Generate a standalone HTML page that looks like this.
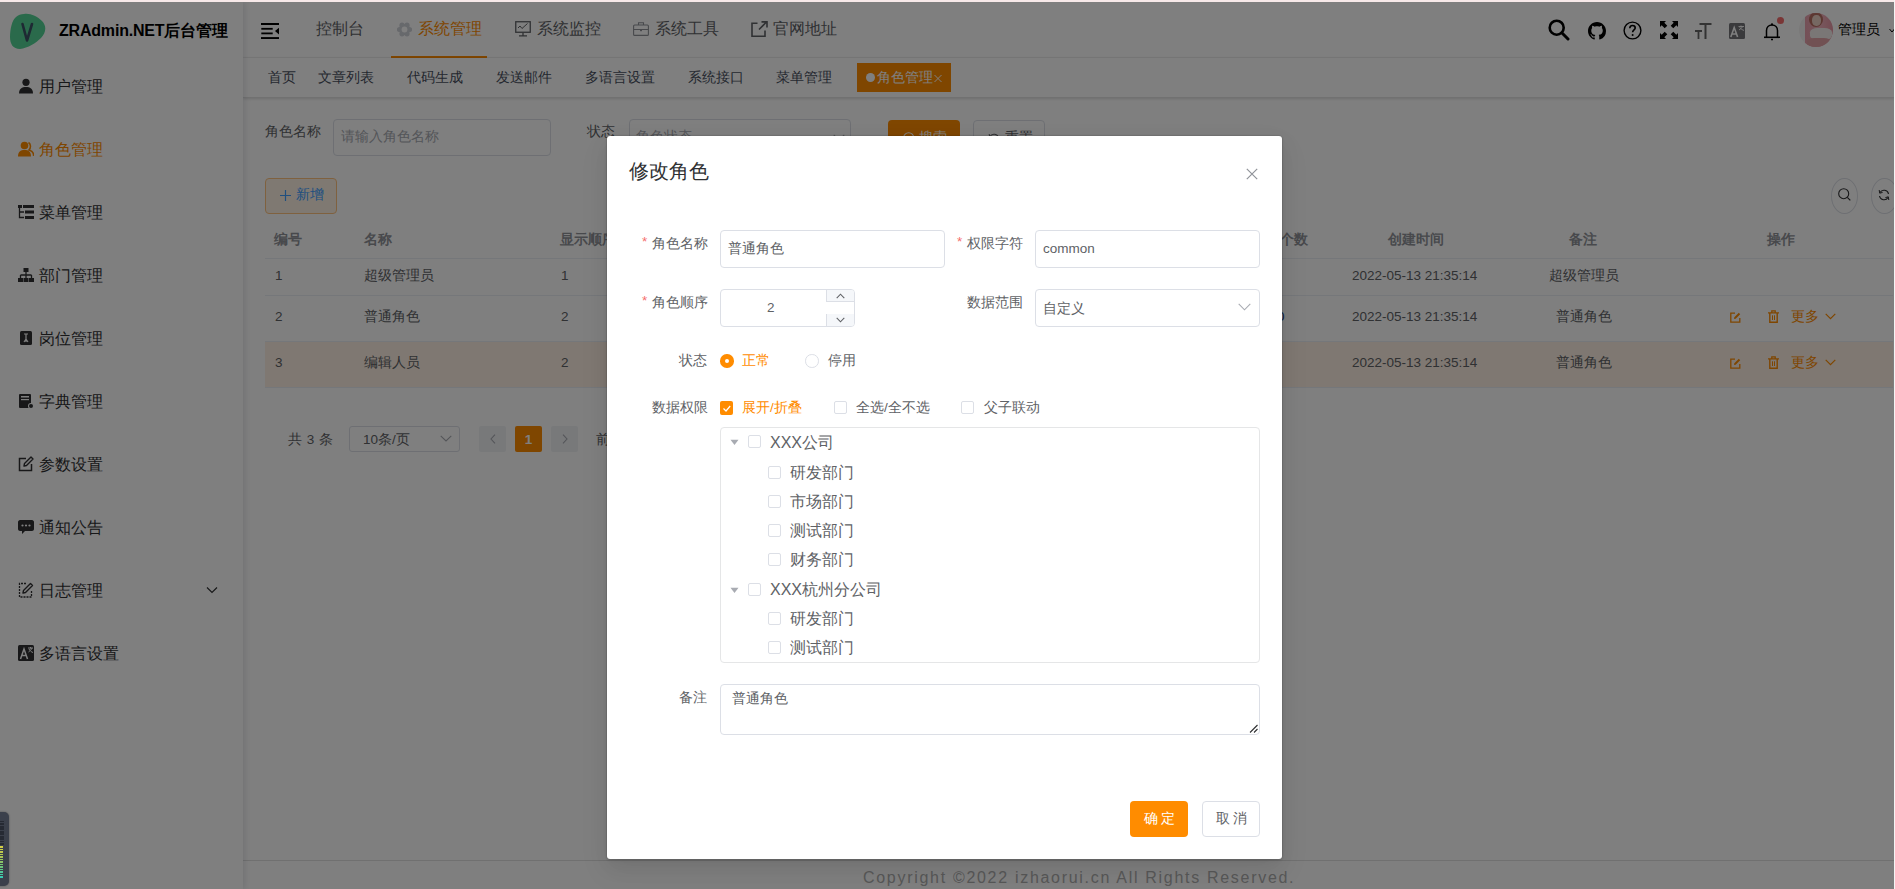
<!DOCTYPE html>
<html><head><meta charset="utf-8">
<style>
*{box-sizing:border-box;margin:0;padding:0}
html,body{width:1895px;height:889px;overflow:hidden;background:#fff;font-family:"Liberation Sans",sans-serif;color:#303133}
.abs{position:absolute}
svg{display:block}
#topline{position:absolute;left:0;top:0;width:1895px;height:2px;background:#f7e9e9;z-index:50}
#sidebar{position:absolute;left:0;top:2px;width:243px;height:887px;background:#fff;z-index:3;box-shadow:2px 0 6px rgba(0,21,41,.11)}
#header{position:absolute;left:243px;top:2px;width:1652px;height:56px;background:#fff;border-bottom:1px solid #f3f3f3}
#tags{position:absolute;left:243px;top:58px;width:1652px;height:40px;background:#fff;z-index:2;border-bottom:1px solid #e2e2e2;box-shadow:0 1px 3px 0 rgba(0,0,0,.12),0 0 3px 0 rgba(0,0,0,.04)}
#main{position:absolute;left:243px;top:98px;width:1652px;height:762px;background:#fff}
#footer{position:absolute;left:243px;top:860px;width:1652px;height:29px;background:#fff;border-top:1px solid #e0e0e0}
#mask{position:absolute;left:0;top:0;width:1895px;height:889px;background:rgba(0,0,0,.5);z-index:20}
#dialog{position:absolute;left:607px;top:136px;width:675px;height:723px;background:#fff;border-radius:3px;z-index:30;box-shadow:0 0 1.5px rgba(0,0,0,.35),0 1px 3px rgba(0,0,0,.12),0 12px 32px 4px rgba(0,0,0,.04),0 8px 20px rgba(0,0,0,.08)}
.mi{position:absolute;left:0;width:243px;height:20px;font-size:16px;line-height:20px;color:#303133}
.mi .ic{position:absolute;left:18px;top:2px;width:16px;height:16px}
.mi .tx{position:absolute;left:39px;top:1px}
.nav{position:absolute;top:17px;font-size:16px;line-height:20px;color:#606266}
.tg{position:absolute;top:10px;font-size:13.5px;line-height:20px;color:#495060}
.lbl14{position:absolute;font-size:13.5px;line-height:20px;white-space:nowrap}
.th{position:absolute;top:132px;font-size:13.5px;line-height:20px;font-weight:bold;color:#909399;white-space:nowrap}
.td{position:absolute;font-size:13.5px;line-height:20px;color:#606266;white-space:nowrap}
.dt{font-size:13.5px}
.ops{position:absolute;left:1487px;width:120px;height:20px}
.req{position:absolute;font-size:13.5px;line-height:14px;color:#f56c6c}
.fl{position:absolute;font-size:13.5px;line-height:20px;color:#606266;white-space:nowrap}
.fv{position:absolute;font-size:13.5px;line-height:20px;color:#606266;white-space:nowrap}
.inp{position:absolute;border:1px solid #dcdfe6;border-radius:4px}
.cb{position:absolute;width:13px;height:13px;border:1px solid #dcdfe6;border-radius:2px;background:#fff}
.tn{position:absolute;font-size:16px;line-height:22px;color:#606266;white-space:nowrap}
</style></head><body>
<div id="topline"></div>
<div class="abs" style="left:1894px;top:0;width:1px;height:889px;background:#f4f4f4;z-index:50"></div>

<!-- SIDEBAR -->
<div id="sidebar">
  <svg class="abs" style="left:10px;top:11px" width="36" height="36" viewBox="0 0 36 36">
    <path d="M14 1 C20 0 27 3 32 8 C37 13 36 20 31 25 C26 30 18 35 10 36 C3 36 0 31 0 24 C0 16 2 7 6 4 C8 2 11 1 14 1 Z" fill="#55d596"/>
    <path d="M12.5 11 L17 27.5 L22 11" fill="none" stroke="#3c5266" stroke-width="2.6" stroke-linecap="round" stroke-linejoin="round"/>
  </svg>
  <div class="abs" style="left:59px;top:19px;font-size:16px;line-height:20px;font-weight:bold;color:#000;letter-spacing:-0.2px">ZRAdmin.NET后台管理</div>

  <div class="mi" style="top:74px"><svg class="ic" viewBox="0 0 16 16"><circle cx="8" cy="4.3" r="3.6" fill="#303133"/><path d="M1 15.5 C1 10.5 4 9 8 9 C12 9 15 10.5 15 15.5 Z" fill="#303133"/></svg><span class="tx">用户管理</span></div>
  <div class="mi" style="top:137px;color:#ff8c00"><svg class="ic" viewBox="0 0 16 16"><circle cx="6.5" cy="4.5" r="3.8" fill="#ff8c00"/><path d="M0 15.5 C0 10.5 2.5 9 6.5 9 C10.5 9 13 10.5 13 15.5 Z" fill="#ff8c00"/><path d="M10.5 1.5 C13 3 13 7 11 9 C14 10 16 12 15.5 15" fill="none" stroke="#ff8c00" stroke-width="1.6"/></svg><span class="tx">角色管理</span></div>
  <div class="mi" style="top:200px"><svg class="ic" viewBox="0 0 16 16"><rect x="0" y="1" width="4" height="3" fill="#303133"/><rect x="5" y="1" width="11" height="3" fill="#303133"/><rect x="7" y="6.5" width="9" height="3" fill="#303133"/><rect x="7" y="12" width="9" height="3" fill="#303133"/><path d="M1.5 4 V13.5 H6 M1.5 8 H6" fill="none" stroke="#303133" stroke-width="1.3"/></svg><span class="tx">菜单管理</span></div>
  <div class="mi" style="top:263px"><svg class="ic" viewBox="0 0 16 16"><rect x="5.5" y="1" width="5" height="4" fill="#303133"/><path d="M8 5 V8 M2.5 8 H13.5 M2.5 8 V11 M8 8 V11 M13.5 8 V11" fill="none" stroke="#303133" stroke-width="1.3"/><rect x="0" y="11" width="5" height="4" fill="#303133"/><rect x="5.5" y="11" width="5" height="4" fill="#303133"/><rect x="11" y="11" width="5" height="4" fill="#303133"/></svg><span class="tx">部门管理</span></div>
  <div class="mi" style="top:326px"><svg class="ic" viewBox="0 0 16 16"><rect x="2" y="1" width="12" height="14" rx="1.5" fill="#303133"/><path d="M6 4 H10 M8 4 V12 M6 12 L8 9 L10 12" fill="none" stroke="#fff" stroke-width="1.2"/></svg><span class="tx">岗位管理</span></div>
  <div class="mi" style="top:389px"><svg class="ic" viewBox="0 0 16 16"><rect x="1" y="1" width="12" height="14" rx="1" fill="#303133"/><rect x="3" y="3" width="8" height="1.5" fill="#fff"/><rect x="3" y="6" width="8" height="1.2" fill="#fff"/><circle cx="13" cy="13" r="3" fill="#fff"/><circle cx="13" cy="13" r="2" fill="#303133"/></svg><span class="tx">字典管理</span></div>
  <div class="mi" style="top:452px"><svg class="ic" viewBox="0 0 16 16"><path d="M8 2.5 H1.5 V14.5 H13.5 V8" fill="none" stroke="#303133" stroke-width="1.5"/><path d="M6 10 L6.5 7.5 L13 1 L15 3 L8.5 9.5 Z" fill="none" stroke="#303133" stroke-width="1.4" stroke-linejoin="round"/></svg><span class="tx">参数设置</span></div>
  <div class="mi" style="top:515px"><svg class="ic" viewBox="0 0 16 16"><path d="M2 1 H14 C15 1 16 2 16 3 V10 C16 11 15 12 14 12 H7 L4 15 V12 H2 C1 12 0 11 0 10 V3 C0 2 1 1 2 1 Z" fill="#303133"/><circle cx="4.5" cy="6.5" r="1.1" fill="#fff"/><circle cx="8" cy="6.5" r="1.1" fill="#fff"/><circle cx="11.5" cy="6.5" r="1.1" fill="#fff"/></svg><span class="tx">通知公告</span></div>
  <div class="mi" style="top:578px"><svg class="ic" viewBox="0 0 16 16"><path d="M8 1.5 H1.5 V15 H13.5 V8" fill="none" stroke="#303133" stroke-width="1.3" stroke-dasharray="2 1"/><path d="M5 11 L5.5 8.5 L12.5 1.5 L14.5 3.5 L7.5 10.5 Z" fill="none" stroke="#303133" stroke-width="1.4" stroke-linejoin="round"/></svg><span class="tx">日志管理</span>
    <svg class="abs" style="left:206px;top:6px" width="12" height="8" viewBox="0 0 12 8"><path d="M1 1.5 L6 6.5 L11 1.5" fill="none" stroke="#303133" stroke-width="1.2"/></svg></div>
  <div class="mi" style="top:641px"><svg class="ic" viewBox="0 0 16 16"><rect x="0" y="0" width="16" height="16" rx="1.5" fill="#303133"/><path d="M2.5 14 L6 4 L9.5 14 M3.8 10.5 H8.2" fill="none" stroke="#fff" stroke-width="1.5"/><path d="M10 3 H15 M12.5 2 V3.5 M10.5 7 C12 6 13.5 4.5 14 3 M11 4 C12 6 13.5 7 15 7.5" fill="none" stroke="#fff" stroke-width="1"/></svg><span class="tx">多语言设置</span></div>
</div>

<!-- HEADER -->
<div id="header">
  <svg class="abs" style="left:18px;top:21px" width="18" height="17" viewBox="0 0 18 17">
    <rect x="0" y="0" width="18" height="2" fill="#000"/>
    <rect x="0.3" y="4.9" width="11.4" height="1.8" fill="#000"/>
    <rect x="0.3" y="9.5" width="11.4" height="1.8" fill="#000"/>
    <path d="M18 4.8 L14 8.1 L18 11.4 Z" fill="#000"/>
    <rect x="0" y="14.1" width="18" height="1.9" fill="#000"/>
  </svg>
  <div class="nav" style="left:73px">控制台</div>
  <svg class="abs" style="left:154px;top:19.5px" width="15" height="15" viewBox="0 0 15 15"><mask id="gh"><rect width="15" height="15" fill="#fff"/><circle cx="7.5" cy="7.5" r="2.9" fill="#000"/></mask><g fill="#cfd2d8" mask="url(#gh)"><circle cx="7.5" cy="7.5" r="5.6"/><circle cx="12.50" cy="7.50" r="2.6"/><circle cx="10.00" cy="11.83" r="2.6"/><circle cx="5.00" cy="11.83" r="2.6"/><circle cx="2.50" cy="7.50" r="2.6"/><circle cx="5.00" cy="3.17" r="2.6"/><circle cx="10.00" cy="3.17" r="2.6"/></g></svg>
  <div class="nav" style="left:175px;color:#ff8c00">系统管理</div>
  <div class="abs" style="left:148px;top:54px;width:96px;height:2px;background:#ff8c00"></div>
  <svg class="abs" style="left:272px;top:19px" width="16" height="16" viewBox="0 0 16 16"><rect x="0.75" y="0.75" width="14.5" height="10.5" fill="none" stroke="#606266" stroke-width="1.3"/><path d="M8 11.5 V14.5 M4 14.8 H12" stroke="#606266" stroke-width="1.3"/><path d="M3 7 L5 5 L7 7.5 L12.5 2.5" fill="none" stroke="#606266" stroke-width="1"/></svg>
  <div class="nav" style="left:294px">系统监控</div>
  <svg class="abs" style="left:390px;top:20px" width="16" height="14" viewBox="0 0 16 14"><rect x="0.6" y="3" width="14.8" height="10.4" rx="1" fill="none" stroke="#909399" stroke-width="1.1"/><path d="M5.5 3 V0.8 H10.5 V3 M0.6 7.5 H15.4" fill="none" stroke="#909399" stroke-width="1.1"/><rect x="7" y="7" width="2" height="2.2" fill="#909399"/></svg>
  <div class="nav" style="left:412px">系统工具</div>
  <svg class="abs" style="left:508px;top:19px" width="17" height="16" viewBox="0 0 17 16"><path d="M6.5 2.2 H1 V15.2 H14 V9.5" fill="none" stroke="#606266" stroke-width="1.6"/><path d="M8 8.5 L15.5 1 M10.5 0.9 H16 V6.4" fill="none" stroke="#606266" stroke-width="1.6"/></svg>
  <div class="nav" style="left:530px">官网地址</div>

  <!-- right icons -->
  <svg class="abs" style="left:1305px;top:17px" width="22" height="22" viewBox="0 0 22 22"><circle cx="8.7" cy="8.7" r="7" fill="none" stroke="#000" stroke-width="2.6"/><path d="M13.8 13.8 L20 20" stroke="#000" stroke-width="3" stroke-linecap="round"/></svg>
  <svg class="abs" style="left:1345px;top:19.5px" width="18" height="18" viewBox="0 0 16 16"><path fill="#000" d="M8 0C3.58 0 0 3.58 0 8c0 3.54 2.29 6.53 5.47 7.59.4.07.55-.17.55-.38 0-.19-.01-.82-.01-1.49-2.01.37-2.53-.49-2.69-.94-.09-.23-.48-.94-.82-1.13-.28-.15-.68-.52-.01-.53.63-.01 1.08.58 1.23.82.72 1.21 1.87.87 2.33.66.07-.52.28-.87.51-1.07-1.78-.2-3.64-.89-3.64-3.95 0-.87.31-1.59.82-2.15-.08-.2-.36-1.02.08-2.12 0 0 .67-.21 2.2.82.64-.18 1.32-.27 2-.27.68 0 1.36.09 2 .27 1.53-1.04 2.2-.82 2.2-.82.44 1.1.16 1.92.08 2.12.51.56.82 1.27.82 2.15 0 3.07-1.87 3.75-3.65 3.95.29.25.54.73.54 1.48 0 1.07-.01 1.93-.01 2.2 0 .21.15.46.55.38A8.013 8.013 0 0016 8c0-4.42-3.58-8-8-8z"/></svg>
  <svg class="abs" style="left:1380px;top:19px" width="19" height="19" viewBox="0 0 19 19"><circle cx="9.5" cy="9.5" r="8.4" fill="none" stroke="#000" stroke-width="1.4"/><path d="M6.8 7.2 C6.8 5.4 8 4.5 9.5 4.5 C11 4.5 12.2 5.5 12.2 7 C12.2 8.8 9.6 9 9.6 11.2" fill="none" stroke="#000" stroke-width="1.6"/><circle cx="9.6" cy="13.9" r="1" fill="#000"/></svg>
  <svg class="abs" style="left:1417px;top:19px" width="18" height="18" viewBox="0 0 18 18"><path fill="#000" d="M0 0 H6 L4.3 1.7 L7.3 4.7 L4.7 7.3 L1.7 4.3 L0 6 Z M18 0 V6 L16.3 4.3 L13.3 7.3 L10.7 4.7 L13.7 1.7 L12 0 Z M0 18 V12 L1.7 13.7 L4.7 10.7 L7.3 13.3 L4.3 16.3 L6 18 Z M18 18 H12 L13.7 16.3 L10.7 13.3 L13.3 10.7 L16.3 13.7 L18 12 Z"/></svg>
  <svg class="abs" style="left:1452px;top:20px" width="17" height="18" viewBox="0 0 17 18"><path d="M4.5 2 H16.5 M10.5 2 V17" stroke="#666" stroke-width="2"/><path d="M0 9 H7 M3.5 9 V17" stroke="#666" stroke-width="1.8"/></svg>
  <svg class="abs" style="left:1486px;top:21px" width="16" height="16" viewBox="0 0 16 16"><rect x="0" y="0" width="16" height="16" rx="1.5" fill="#747478"/><path d="M1.8 14 L5.2 4.5 L8.6 14 M3 11 H7.4" fill="none" stroke="#fff" stroke-width="1.6"/><path d="M9.5 3.5 H15 M12 2.5 V4 M10 7 C11.5 6 13 4.8 13.8 3.5 M10.8 4.3 C11.8 6 13.5 7 15 7.4" fill="none" stroke="#fff" stroke-width="0.9"/></svg>
  <svg class="abs" style="left:1520px;top:20px" width="18" height="19" viewBox="0 0 18 19"><path d="M3.5 15 V8.5 C3.5 5.2 5.8 3 9 3 C12.2 3 14.5 5.2 14.5 8.5 V15" fill="none" stroke="#000" stroke-width="1.5"/><path d="M1 15.3 H17" stroke="#000" stroke-width="1.6"/><circle cx="9" cy="2.3" r="1.1" fill="#000"/><path d="M8 17.5 H10" stroke="#000" stroke-width="1.3"/></svg>
  <div class="abs" style="left:1534px;top:15px;width:7px;height:7px;border-radius:50%;background:#f56c6c"></div>
  <div class="abs" style="left:1556px;top:10.5px;width:34px;height:34px;border-radius:50%;overflow:hidden;background:#f4f2f2">
    <div class="abs" style="left:6px;top:0;width:30px;height:34px;background:linear-gradient(90deg,#e9a0ad 0%,#f0b0bb 50%,#e691a0 100%)"></div>
    <div class="abs" style="left:10px;top:-1px;width:14px;height:15px;border-radius:50%;background:#b86e62"></div>
    <div class="abs" style="left:12.5px;top:2px;width:9px;height:11px;border-radius:45%;background:#ecd0c4"></div>
    <div class="abs" style="left:11px;top:15px;width:22px;height:12px;border-radius:35%;background:#f4eeec"></div>
    <div class="abs" style="left:8px;top:25px;width:24px;height:12px;border-radius:30%;background:#e2a2a6"></div>
  </div>
  <div class="abs" style="left:1595px;top:18px;font-size:13.5px;line-height:20px;color:#000">管理员</div>
  <svg class="abs" style="left:1646px;top:26px" width="6" height="6" viewBox="0 0 6 6"><path d="M0.5 1 L3 4 L5.5 1" fill="none" stroke="#000" stroke-width="1"/></svg>
</div>

<div id="tags">
  <div class="tg" style="left:25px">首页</div>
  <div class="tg" style="left:75px">文章列表</div>
  <div class="tg" style="left:164px">代码生成</div>
  <div class="tg" style="left:253px">发送邮件</div>
  <div class="tg" style="left:342px">多语言设置</div>
  <div class="tg" style="left:445px">系统接口</div>
  <div class="tg" style="left:533px">菜单管理</div>
  <div class="abs" style="left:614px;top:5px;width:94px;height:29px;background:#ff8c00"></div>
  <div class="abs" style="left:623px;top:15px;width:9px;height:9px;border-radius:50%;background:#fff"></div>
  <div class="tg" style="left:634px;color:#fff">角色管理</div>
  <svg class="abs" style="left:691px;top:16px" width="8" height="9" viewBox="0 0 8 9"><path d="M0.5 1 L7.5 8 M7.5 1 L0.5 8" stroke="#fff" stroke-width="1"/></svg>
</div>

<div id="main">
  <!-- search form (page coords minus 243,98) -->
  <div class="lbl14" style="left:22px;top:24px;color:#606266">角色名称</div>
  <div class="abs" style="left:90px;top:21px;width:218px;height:37px;border:1px solid #dcdfe6;border-radius:4px"></div>
  <div class="lbl14" style="left:98px;top:29px;color:#a8abb2">请输入角色名称</div>
  <div class="lbl14" style="left:344px;top:24px;color:#606266">状态</div>
  <div class="abs" style="left:386px;top:21px;width:222px;height:37px;border:1px solid #dcdfe6;border-radius:4px"></div>
  <div class="lbl14" style="left:393px;top:29px;color:#a8abb2">角色状态</div>
  <div class="abs" style="left:645px;top:22px;width:72px;height:36px;background:#ff8c00;border-radius:4px"></div>
  <svg class="abs" style="left:660px;top:34px" width="13" height="13" viewBox="0 0 13 13"><circle cx="5.7" cy="5.7" r="5" fill="none" stroke="#fff" stroke-width="1.1"/><path d="M9.3 9.3 L12.3 12.3" stroke="#fff" stroke-width="1.2"/></svg>
  <div class="lbl14" style="left:676px;top:30px;color:#fff">搜索</div>
  <div class="abs" style="left:730px;top:22px;width:72px;height:36px;border:1px solid #dcdfe6;border-radius:4px"></div>
  <svg class="abs" style="left:745px;top:35px" width="12" height="12" viewBox="0 0 12 12"><path d="M10.5 5 A4.6 4.6 0 0 0 2 3.5 M1.5 7 A4.6 4.6 0 0 0 10 8.5" fill="none" stroke="#606266" stroke-width="1.1"/><path d="M1.2 1 L1.7 4.2 L4.6 3.4" fill="none" stroke="#606266" stroke-width="1"/></svg>
  <div class="lbl14" style="left:762px;top:30px;color:#606266">重置</div>
  <svg class="abs" style="left:590px;top:36px" width="12" height="7" viewBox="0 0 12 7"><path d="M0.7 0.8 L6 6 L11.3 0.8" fill="none" stroke="#a8abb2" stroke-width="1.1"/></svg>
  <div class="td" style="left:1034px;top:209px;color:#1f3f8a">0</div>

  <!-- add button -->
  <div class="abs" style="left:22px;top:80px;width:72px;height:36px;background:#fff3e5;border:1px solid #ffc27e;border-radius:4px"></div>
  <svg class="abs" style="left:37px;top:92px" width="11" height="11" viewBox="0 0 11 11"><path d="M5.5 0 V11 M0 5.5 H11" stroke="#409eff" stroke-width="1.2"/></svg>
  <div class="lbl14" style="left:53px;top:87px;color:#409eff">新增</div>

  <!-- toolbar circles -->
  <div class="abs" style="left:1588px;top:80px;width:27px;height:36px;border:1px solid #dcdfe6;border-radius:50%"></div>
  <svg class="abs" style="left:1595px;top:90px" width="13" height="13" viewBox="0 0 13 13"><circle cx="5.7" cy="5.7" r="5" fill="none" stroke="#303133" stroke-width="1.1"/><path d="M9.3 9.3 L12.3 12.3" stroke="#303133" stroke-width="1.2"/></svg>
  <div class="abs" style="left:1628px;top:80px;width:27px;height:36px;border:1px solid #dcdfe6;border-radius:50%"></div>
  <svg class="abs" style="left:1635px;top:91px" width="12" height="12" viewBox="0 0 12 12"><path d="M10.5 5 A4.6 4.6 0 0 0 2 3.5 M1.5 7 A4.6 4.6 0 0 0 10 8.5" fill="none" stroke="#303133" stroke-width="1.1"/><path d="M1.2 1 L1.7 4.2 L4.6 3.4 M10.8 11 L10.3 7.8 L7.4 8.6" fill="none" stroke="#303133" stroke-width="1"/></svg>

  <!-- table -->
  <div class="abs" style="left:22px;top:160px;width:1628px;height:1px;background:#ebeef5"></div>
  <div class="th" style="left:31px">编号</div>
  <div class="th" style="left:121px">名称</div>
  <div class="th" style="left:317px">显示顺序</div>
  <div class="th" style="left:1009px">用户个数</div>
  <div class="th" style="left:1145px">创建时间</div>
  <div class="th" style="left:1326px">备注</div>
  <div class="th" style="left:1524px">操作</div>
  <div class="abs" style="left:22px;top:197px;width:1628px;height:1px;background:#ebeef5"></div>
  <div class="abs" style="left:22px;top:243px;width:1628px;height:46px;background:#fff1e5"></div>
  <div class="abs" style="left:22px;top:243px;width:1628px;height:1px;background:#ebeef5"></div>
  <div class="abs" style="left:22px;top:289px;width:1628px;height:1px;background:#ebeef5"></div>

  <div class="td" style="left:32px;top:168px">1</div>
  <div class="td" style="left:121px;top:168px">超级管理员</div>
  <div class="td" style="left:318px;top:168px">1</div>
  <div class="td dt" style="left:1109px;top:168px">2022-05-13 21:35:14</div>
  <div class="td" style="left:1306px;top:168px">超级管理员</div>

  <div class="td" style="left:32px;top:209px">2</div>
  <div class="td" style="left:121px;top:209px">普通角色</div>
  <div class="td" style="left:318px;top:209px">2</div>
  <div class="td dt" style="left:1109px;top:209px">2022-05-13 21:35:14</div>
  <div class="td" style="left:1313px;top:209px">普通角色</div>

  <div class="td" style="left:32px;top:255px">3</div>
  <div class="td" style="left:121px;top:255px">编辑人员</div>
  <div class="td" style="left:318px;top:255px">2</div>
  <div class="td dt" style="left:1109px;top:255px">2022-05-13 21:35:14</div>
  <div class="td" style="left:1313px;top:255px">普通角色</div>

  <div class="ops" style="top:209px">
    <svg class="abs" style="left:0;top:5px" width="11" height="11" viewBox="0 0 11 11"><path d="M5 1.2 H0.8 V10.2 H9.8 V6" fill="none" stroke="#ff8c00" stroke-width="1.3"/><path d="M4 7 L4.3 5.3 L8.8 0.8 L10.2 2.2 L5.7 6.7 Z" fill="#ff8c00"/></svg>
    <svg class="abs" style="left:38px;top:3px" width="11" height="13" viewBox="0 0 11 13"><path d="M0 2.8 H11 M3.8 2.8 V0.8 H7.2 V2.8" fill="none" stroke="#ff8c00" stroke-width="1.3"/><path d="M1.8 3 V12.2 H9.2 V3" fill="none" stroke="#ff8c00" stroke-width="1.4"/><path d="M4.5 5.3 V10 M6.5 5.3 V10" stroke="#ff8c00" stroke-width="1"/></svg>
    <div class="abs" style="left:61px;top:0;font-size:13.5px;line-height:20px;color:#ff8c00">更多</div>
    <svg class="abs" style="left:95px;top:6px" width="11" height="7" viewBox="0 0 11 7"><path d="M0.7 0.8 L5.5 5.6 L10.3 0.8" fill="none" stroke="#ff8c00" stroke-width="1.2"/></svg>
  </div>
  <div class="ops" style="top:255px">
    <svg class="abs" style="left:0;top:5px" width="11" height="11" viewBox="0 0 11 11"><path d="M5 1.2 H0.8 V10.2 H9.8 V6" fill="none" stroke="#ff8c00" stroke-width="1.3"/><path d="M4 7 L4.3 5.3 L8.8 0.8 L10.2 2.2 L5.7 6.7 Z" fill="#ff8c00"/></svg>
    <svg class="abs" style="left:38px;top:3px" width="11" height="13" viewBox="0 0 11 13"><path d="M0 2.8 H11 M3.8 2.8 V0.8 H7.2 V2.8" fill="none" stroke="#ff8c00" stroke-width="1.3"/><path d="M1.8 3 V12.2 H9.2 V3" fill="none" stroke="#ff8c00" stroke-width="1.4"/><path d="M4.5 5.3 V10 M6.5 5.3 V10" stroke="#ff8c00" stroke-width="1"/></svg>
    <div class="abs" style="left:61px;top:0;font-size:13.5px;line-height:20px;color:#ff8c00">更多</div>
    <svg class="abs" style="left:95px;top:6px" width="11" height="7" viewBox="0 0 11 7"><path d="M0.7 0.8 L5.5 5.6 L10.3 0.8" fill="none" stroke="#ff8c00" stroke-width="1.2"/></svg>
  </div>

  <!-- pagination -->
  <div class="lbl14" style="left:45px;top:332px;color:#606266;word-spacing:1px">共 3 条</div>
  <div class="abs" style="left:106px;top:328px;width:111px;height:26px;border:1px solid #dcdfe6;border-radius:3px"></div>
  <div class="lbl14" style="left:120px;top:332px;color:#606266">10条/页</div>
  <svg class="abs" style="left:197px;top:337px" width="12" height="7" viewBox="0 0 12 7"><path d="M0.7 0.8 L6 6 L11.3 0.8" fill="none" stroke="#a8abb2" stroke-width="1.1"/></svg>
  <div class="abs" style="left:236px;top:328px;width:27px;height:26px;background:#f0f2f5;border-radius:2px"></div>
  <svg class="abs" style="left:247px;top:336px" width="6" height="10" viewBox="0 0 6 10"><path d="M5 0.7 L1 5 L5 9.3" fill="none" stroke="#a8abb2" stroke-width="1.1"/></svg>
  <div class="abs" style="left:272px;top:328px;width:27px;height:26px;background:#ff8c00;border-radius:2px"></div>
  <div class="abs" style="left:272px;top:332px;width:27px;text-align:center;font-size:13.5px;line-height:20px;font-weight:bold;color:#fff">1</div>
  <div class="abs" style="left:308px;top:328px;width:27px;height:26px;background:#f0f2f5;border-radius:2px"></div>
  <svg class="abs" style="left:319px;top:336px" width="6" height="10" viewBox="0 0 6 10"><path d="M1 0.7 L5 5 L1 9.3" fill="none" stroke="#a8abb2" stroke-width="1.1"/></svg>
  <div class="lbl14" style="left:353px;top:332px;color:#606266">前往</div>
</div>

<div id="footer">
  <div class="abs" style="left:620px;top:7px;font-size:16px;line-height:20px;color:#b0b0b0;letter-spacing:1.7px;white-space:nowrap">Copyright ©2022 izhaorui.cn All Rights Reserved.</div>
</div>

<div id="mask"></div>
<div class="abs" style="left:-10px;top:812px;width:19px;height:74px;background:#3b404b;border-radius:5px;z-index:40;box-shadow:0 0 2px rgba(0,0,0,.4)">
  <div class="abs" style="left:10px;top:9px;width:4px;height:25px;background:repeating-linear-gradient(180deg,#262a33 0,#262a33 1.5px,#3b404b 1.5px,#3b404b 2.5px)"></div>
  <div class="abs" style="left:10px;top:34px;width:3px;height:32px;background:linear-gradient(180deg,#d6cf45 0%,#a9c455 35%,#6cc47a 65%,#35c9b5 100%)"></div>
  <div class="abs" style="left:10px;top:34px;width:3px;height:32px;background:repeating-linear-gradient(180deg,transparent 0,transparent 1.5px,#3b404b 1.5px,#3b404b 2.5px)"></div>
</div>

<div id="dialog">
  <div class="abs" style="left:22px;top:21px;font-size:20px;line-height:28px;color:#303133">修改角色</div>
  <svg class="abs" style="left:639px;top:32px" width="12" height="12" viewBox="0 0 12 12"><path d="M0.8 0.8 L11.2 11.2 M11.2 0.8 L0.8 11.2" stroke="#909399" stroke-width="1.2"/></svg>

  <!-- row 1 -->
  <div class="req" style="left:35px;top:99px">*</div>
  <div class="fl" style="left:45px;top:98px">角色名称</div>
  <div class="inp" style="left:113px;top:94px;width:225px;height:38px"></div>
  <div class="fv" style="left:121px;top:103px">普通角色</div>
  <div class="req" style="left:350px;top:99px">*</div>
  <div class="fl" style="left:360px;top:98px">权限字符</div>
  <div class="inp" style="left:428px;top:94px;width:225px;height:38px"></div>
  <div class="fv" style="left:436px;top:103px;font-size:13.5px">common</div>

  <!-- row 2 -->
  <div class="req" style="left:35px;top:158px">*</div>
  <div class="fl" style="left:45px;top:157px">角色顺序</div>
  <div class="inp" style="left:113px;top:153px;width:135px;height:38px"></div>
  <div class="abs" style="left:219px;top:154px;width:28px;height:12px;background:#f5f7fa;border-left:1px solid #dcdfe6;border-bottom:1px solid #dcdfe6;border-top-right-radius:3px"></div>
  <div class="abs" style="left:219px;top:178px;width:28px;height:12px;background:#f5f7fa;border-left:1px solid #dcdfe6;border-bottom-right-radius:3px"></div>
  <svg class="abs" style="left:229px;top:157px" width="9" height="6" viewBox="0 0 9 6"><path d="M0.7 5.2 L4.5 1.2 L8.3 5.2" fill="none" stroke="#606266" stroke-width="1.1"/></svg>
  <svg class="abs" style="left:229px;top:181px" width="9" height="6" viewBox="0 0 9 6"><path d="M0.7 0.8 L4.5 4.8 L8.3 0.8" fill="none" stroke="#606266" stroke-width="1.1"/></svg>
  <div class="fv" style="left:160px;top:162px">2</div>
  <div class="fl" style="left:360px;top:157px">数据范围</div>
  <div class="inp" style="left:428px;top:153px;width:225px;height:38px"></div>
  <div class="fv" style="left:436px;top:163px">自定义</div>
  <svg class="abs" style="left:631px;top:167px" width="13" height="8" viewBox="0 0 13 8"><path d="M0.7 0.8 L6.5 6.8 L12.3 0.8" fill="none" stroke="#a8abb2" stroke-width="1.1"/></svg>

  <!-- row 3 status -->
  <div class="fl" style="left:72px;top:215px">状态</div>
  <div class="abs" style="left:113px;top:218px;width:13.5px;height:13.5px;border-radius:50%;background:#ff8c00"></div>
  <div class="abs" style="left:117.5px;top:222.5px;width:4.5px;height:4.5px;border-radius:50%;background:#fff"></div>
  <div class="fl" style="left:135px;top:215px;color:#ff8c00">正常</div>
  <div class="abs" style="left:198px;top:218px;width:13.5px;height:13.5px;border-radius:50%;border:1px solid #dcdfe6"></div>
  <div class="fl" style="left:221px;top:215px">停用</div>

  <!-- row 4 data perms -->
  <div class="fl" style="left:45px;top:262px">数据权限</div>
  <div class="abs" style="left:113px;top:265px;width:13px;height:13.5px;border-radius:2px;background:#ff8c00"></div>
  <svg class="abs" style="left:112.5px;top:265px" width="14" height="14" viewBox="0 0 14 14"><path d="M3.5 7.5 L6 10 L10.2 5" fill="none" stroke="#fff" stroke-width="1.2"/></svg>
  <div class="fl" style="left:135px;top:262px;color:#ff8c00">展开/折叠</div>
  <div class="cb" style="left:227px;top:265px"></div>
  <div class="fl" style="left:249px;top:262px">全选/全不选</div>
  <div class="cb" style="left:354px;top:265px"></div>
  <div class="fl" style="left:377px;top:262px">父子联动</div>

  <!-- tree -->
  <div class="abs" style="left:113px;top:291px;width:540px;height:236px;border:1px solid #e5e6e7;border-radius:4px"></div>
  <svg class="abs" style="left:123px;top:303px" width="9" height="7" viewBox="0 0 9 7"><path d="M0.5 0.8 H8.5 L4.5 6 Z" fill="#a8abb2"/></svg>
  <div class="cb" style="left:141px;top:299px"></div>
  <div class="tn" style="left:163px;top:296px">XXX公司</div>
  <div class="cb" style="left:161px;top:330px"></div>
  <div class="tn" style="left:183px;top:326px">研发部门</div>
  <div class="cb" style="left:161px;top:359px"></div>
  <div class="tn" style="left:183px;top:355px">市场部门</div>
  <div class="cb" style="left:161px;top:388px"></div>
  <div class="tn" style="left:183px;top:384px">测试部门</div>
  <div class="cb" style="left:161px;top:417px"></div>
  <div class="tn" style="left:183px;top:413px">财务部门</div>
  <svg class="abs" style="left:123px;top:451px" width="9" height="7" viewBox="0 0 9 7"><path d="M0.5 0.8 H8.5 L4.5 6 Z" fill="#a8abb2"/></svg>
  <div class="cb" style="left:141px;top:447px"></div>
  <div class="tn" style="left:163px;top:443px">XXX杭州分公司</div>
  <div class="cb" style="left:161px;top:476px"></div>
  <div class="tn" style="left:183px;top:472px">研发部门</div>
  <div class="cb" style="left:161px;top:505px"></div>
  <div class="tn" style="left:183px;top:501px">测试部门</div>

  <!-- remark -->
  <div class="fl" style="left:72px;top:552px">备注</div>
  <div class="inp" style="left:113px;top:548px;width:540px;height:51px"></div>
  <div class="fv" style="left:125px;top:553px">普通角色</div>
  <svg class="abs" style="left:642px;top:588px" width="9" height="9" viewBox="0 0 9 9"><path d="M8.5 1 L1 8.5 M8.5 5 L5 8.5" stroke="#303133" stroke-width="1.1"/></svg>

  <!-- footer buttons -->
  <div class="abs" style="left:523px;top:665px;width:58px;height:36px;background:#ff8c00;border-radius:4px"></div>
  <div class="abs" style="left:523px;top:673px;width:58px;text-align:center;font-size:13.5px;line-height:20px;color:#fff;letter-spacing:3px;padding-left:3px">确定</div>
  <div class="abs" style="left:595px;top:665px;width:58px;height:36px;border:1px solid #dcdfe6;border-radius:4px"></div>
  <div class="abs" style="left:595px;top:673px;width:58px;text-align:center;font-size:13.5px;line-height:20px;color:#606266;letter-spacing:3px;padding-left:3px">取消</div>
</div>

</body></html>
